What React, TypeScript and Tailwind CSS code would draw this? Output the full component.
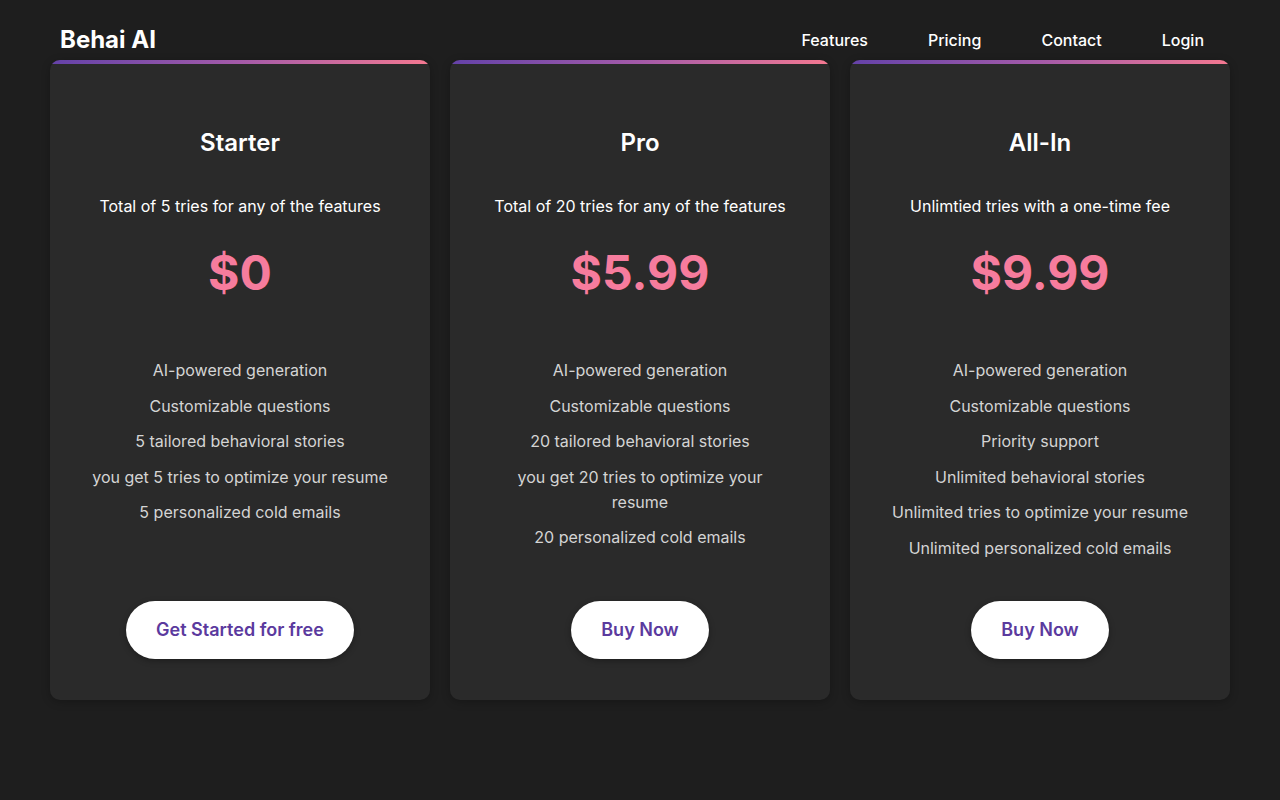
import React from 'react'

interface Plan {
  name: string
  blurb: string
  price: string
  features: string[]
  cta: string
}

const plans: Plan[] = [
  {
    name: 'Starter',
    blurb: 'Total of 5 tries for any of the features',
    price: '$0',
    features: [
      'AI-powered generation',
      'Customizable questions',
      '5 tailored behavioral stories',
      'you get 5 tries to optimize your resume',
      '5 personalized cold emails',
    ],
    cta: 'Get Started for free',
  },
  {
    name: 'Pro',
    blurb: 'Total of 20 tries for any of the features',
    price: '$5.99',
    features: [
      'AI-powered generation',
      'Customizable questions',
      '20 tailored behavioral stories',
      'you get 20 tries to optimize your resume',
      '20 personalized cold emails',
    ],
    cta: 'Buy Now',
  },
  {
    name: 'All-In',
    blurb: 'Unlimtied tries with a one-time fee',
    price: '$9.99',
    features: [
      'AI-powered generation',
      'Customizable questions',
      'Priority support',
      'Unlimited behavioral stories',
      'Unlimited tries to optimize your resume',
      'Unlimited personalized cold emails',
    ],
    cta: 'Buy Now',
  },
]

function PlanCard({ plan }: { plan: Plan }) {
  return (
    <div className="flex flex-col rounded-[10px] overflow-hidden bg-[#2a2a2a] shadow-[0_2px_8px_rgba(0,0,0,0.25)]">
      {/* gradient strip on top */}
      <div className="h-[4px] bg-gradient-to-r from-[#6441a8] via-[#a45aa8] to-[#f47890]" />
      <div className="flex flex-1 flex-col items-center px-10 pb-[41px] pt-[63px] text-center">
        <h2 className="text-2xl leading-8 font-semibold text-white">{plan.name}</h2>
        <p className="mt-[35px] text-base leading-6 text-white">{plan.blurb}</p>
        <div className="mt-[31px] text-5xl leading-[48px] font-bold text-[#f67c9d]">{plan.price}</div>
        <ul className="mb-[40px] mt-[61px] flex flex-col gap-[10.5px] text-base leading-[25px] text-[#d4d4d4]">
          {plan.features.map((f) => (
            <li key={f}>{f}</li>
          ))}
        </ul>
        <button className="mt-auto rounded-full bg-white px-[30px] py-[17px] text-lg leading-6 font-semibold text-[#5b3a9e] shadow-[0_2px_6px_rgba(0,0,0,0.3)]">
          {plan.cta}
        </button>
      </div>
    </div>
  )
}

export default function App() {
  return (
    <div className="min-h-[800px] bg-[#1e1e1e] font-['Inter','Noto_Sans',sans-serif]">
      <header className="flex items-center justify-between pl-[60px] pr-[76px] pt-[24px]">
        <div className="text-2xl leading-8 font-bold text-white">Behai AI</div>
        <nav className="flex gap-[60px] text-base leading-6 font-medium text-white">
          <a href="#">Features</a>
          <a href="#">Pricing</a>
          <a href="#">Contact</a>
          <a href="#">Login</a>
        </nav>
      </header>
      <main className="mt-[4px] grid grid-cols-3 gap-5 px-[50px]">
        {plans.map((p) => (
          <PlanCard key={p.name} plan={p} />
        ))}
      </main>
    </div>
  )
}
